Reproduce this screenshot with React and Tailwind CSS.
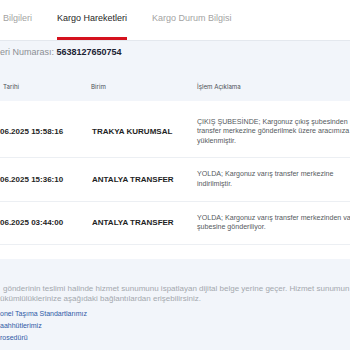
export default function App() {
  const rows = [
    {
      date: "06.2025 15:58:16",
      unit: "TRAKYA KURUMSAL",
      desc: "ÇIKIŞ ŞUBESİNDE; Kargonuz çıkış şubesinden transfer merkezine gönderilmek üzere aracımıza yüklenmiştir.",
      h: "h-[57px] pt-[6px]",
    },
    {
      date: "06.2025 15:36:10",
      unit: "ANTALYA TRANSFER",
      desc: "YOLDA; Kargonuz varış transfer merkezine indirilmiştir.",
      h: "h-[44px]",
    },
    {
      date: "06.2025 03:44:00",
      unit: "ANTALYA TRANSFER",
      desc: "YOLDA; Kargonuz varış transfer merkezinden varış şubesine gönderiliyor.",
      h: "h-[43px]",
    },
  ];
  return (
    <div
      className="w-[350px] h-[350px] overflow-hidden bg-[#f2f5fa]"
      style={{ fontFamily: '"Liberation Sans", Arial, sans-serif' }}
    >
      {/* Tabs */}
      <div className="h-[41px] bg-white border-b border-[#e4e8ee] overflow-hidden">
        <div className="flex whitespace-nowrap text-[9px] leading-[12px]">
          <div className="w-[57px] shrink-0 pl-[3px] h-[40px] pt-[12px] text-[#a3a3a3]">Bilgileri</div>
          <div className="shrink-0 h-[40px] pt-[12px] text-[#262626] border-b-[3px] border-[#d5121e]">
            Kargo Hareketleri
          </div>
          <div className="shrink-0 ml-[25px] h-[40px] pt-[12px] text-[#a3a3a3]">Kargo Durum Bilgisi</div>
        </div>
      </div>

      {/* Number */}
      <div className="pt-[5px] h-[17px] whitespace-nowrap text-[9px] leading-[12px]">
        <span className="text-[#8c8f94]">eri Numarası: </span>
        <span className="font-bold text-[#1c2333]">5638127650754</span>
      </div>

      {/* Table header */}
      <div
        className="h-[43px] pt-[25px] flex text-[6.2px] leading-[8px] text-[#4b4f56] whitespace-nowrap"
        style={{ fontFamily: 'Inter, "Liberation Sans", sans-serif' }}
      >
        <div className="w-[91px] shrink-0 pl-[3px]">Tarihi</div>
        <div className="w-[106px] shrink-0">Birim</div>
        <div className="shrink-0">İşlem Açıklama</div>
      </div>

      {/* Rows */}
      <div className="bg-white pb-[14px]">
        {rows.map((r, i) => (
          <div
            key={i}
            className={`${r.h} flex items-center border-b border-[#eceff3]`}
          >
            <div className="w-[92px] shrink-0 whitespace-nowrap text-[8px] font-bold text-[#1f1f1f]">
              {r.date}
            </div>
            <div className="w-[105px] shrink-0 whitespace-nowrap text-[8px] font-bold text-[#1f1f1f]">
              {r.unit}
            </div>
            <div className="w-[166px] shrink-0 text-[7.1px] leading-[9.2px] text-[#555a60]">
              {r.desc}
            </div>
          </div>
        ))}
      </div>

      {/* Footer */}
      <div className="pt-[25px] whitespace-nowrap text-[8px] leading-[10px] text-[#a4a8ae]">
        <div className="pl-[3px]">
          gönderinin teslimi halinde hizmet sunumunu ispatlayan dijital belge yerine geçer. Hizmet sunumun
        </div>
        <div>ükümlülüklerinize aşağıdaki bağlantılardan erişebilirsiniz.</div>
        <div className="mt-[4px] flex flex-col text-[7px] leading-[12px] text-[#2f5aa6]">
          <div>onel Taşıma Standartlarımız</div>
          <div>aahhütlerimiz</div>
          <div>rosedürü</div>
        </div>
      </div>
    </div>
  );
}
